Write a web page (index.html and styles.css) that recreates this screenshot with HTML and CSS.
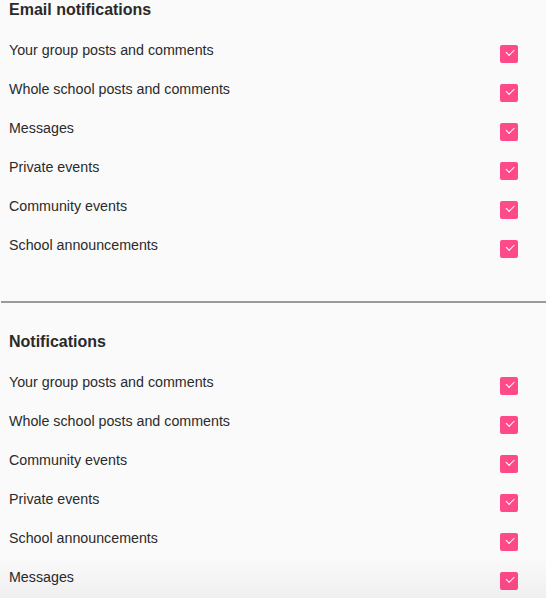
FILE: index.html
```html
<!DOCTYPE html>
<html lang="en">
<head>
    <meta charset="UTF-8">
    <meta name="viewport" content="width=device-width, initial-scale=1.0">
    <title>Notification Settings</title>
    <link rel="stylesheet" href="styles.css">
</head>
<body>
    <div class="section">
        <h2>Email notifications</h2>
        <div class="row"><span>Your group posts and comments</span><span class="check"></span></div>
        <div class="row"><span>Whole school posts and comments</span><span class="check"></span></div>
        <div class="row"><span>Messages</span><span class="check"></span></div>
        <div class="row"><span>Private events</span><span class="check"></span></div>
        <div class="row"><span>Community events</span><span class="check"></span></div>
        <div class="row"><span>School announcements</span><span class="check"></span></div>
    </div>

    <hr class="divider">

    <div class="section second">
        <h2>Notifications</h2>
        <div class="row"><span>Your group posts and comments</span><span class="check"></span></div>
        <div class="row"><span>Whole school posts and comments</span><span class="check"></span></div>
        <div class="row"><span>Community events</span><span class="check"></span></div>
        <div class="row"><span>Private events</span><span class="check"></span></div>
        <div class="row"><span>School announcements</span><span class="check"></span></div>
        <div class="row"><span>Messages</span><span class="check"></span></div>
    </div>

    <div class="bottom-fade"></div>
</body>
</html>
```

FILE: styles.css
```css
body {
    margin: 0;
    font-family: "Liberation Sans", Arial, sans-serif;
    background: #fafafa;
    color: #2b2b2b;
}

.section {
    padding: 0 28px 0 9px;
}

.section.second {
    padding-top: 29px;
}

.section h2 {
    margin: 0 0 20px;
    font-size: 16px;
    line-height: 20px;
    font-weight: bold;
    color: #2a2a2a;
}

.row {
    display: flex;
    justify-content: space-between;
    align-items: flex-start;
    height: 39px;
    font-size: 14.25px;
    line-height: 20px;
}

.check {
    width: 18px;
    height: 18px;
    margin-top: 5px;
    border-radius: 2px;
    background: #ff4a8a;
    position: relative;
}

/* tick mark */
.check::after {
    content: "";
    position: absolute;
    left: 5.5px;
    top: 4px;
    width: 7px;
    height: 3.5px;
    border-left: 1.5px solid #fff;
    border-bottom: 1.5px solid #fff;
    transform: rotate(-45deg);
    transform-origin: center;
}

.divider {
    margin: 27px 0 0 1px;
    border: 0;
    height: 2px;
    background: #9a9a9a;
}

.bottom-fade {
    position: fixed;
    left: 0;
    right: 0;
    bottom: 0;
    height: 40px;
    background: linear-gradient(to bottom, rgba(0, 0, 0, 0), rgba(0, 0, 0, 0.045));
    pointer-events: none;
}
```
